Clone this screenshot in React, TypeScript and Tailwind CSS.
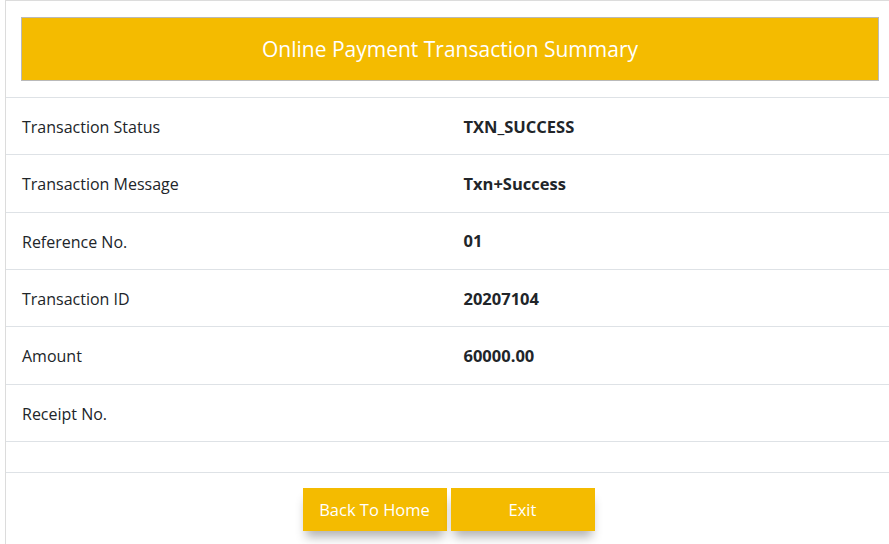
const rows = [
  { label: "Transaction Status", value: "TXN_SUCCESS" },
  { label: "Transaction Message", value: "Txn+Success" },
  { label: "Reference No.", value: "01" },
  { label: "Transaction ID", value: "20207104" },
  { label: "Amount", value: "60000.00" },
  { label: "Receipt No.", value: "" },
];

export default function App() {
  return (
    <div className="w-full h-[544px] overflow-hidden bg-white font-['Open_Sans',sans-serif] text-[#212529]">
      <div className="ml-[5px] w-[890px] border-l border-t border-[#dcdcdc] min-h-[560px]">
        <div className="pt-4 pb-4 pl-[15px] pr-[16px]">
          <div className="h-16 pt-[2px] bg-[#f4bb00] border border-[#b9b9b9] flex items-center justify-center text-white text-[21px]">
            Online Payment Transaction Summary
          </div>
        </div>
        <div className="border-t border-[#dee2e6]">
          {rows.map((r) => (
            <div key={r.label} className="flex h-[57.33px] pt-[2px] items-center border-b border-[#dee2e6]">
              <div className="w-1/2 pl-4 text-[16px]">{r.label}</div>
              <div className="w-1/2 pl-[13px] text-[16.5px] font-bold">{r.value}</div>
            </div>
          ))}
          <div className="h-[31px] border-b border-[#dee2e6]" />
        </div>
        <div className="flex justify-center gap-1 pt-[15px] pr-[4px]">
          <button className="w-36 h-[43px] pt-[2px] bg-[#f4bb00] text-white text-[16.5px] shadow-[0_9px_10px_-3px_rgba(0,0,0,0.3)]">
            Back To Home
          </button>
          <button className="w-36 h-[43px] pt-[2px] bg-[#f4bb00] text-white text-[16.5px] shadow-[0_9px_10px_-3px_rgba(0,0,0,0.3)]">
            Exit
          </button>
        </div>
      </div>
    </div>
  );
}
